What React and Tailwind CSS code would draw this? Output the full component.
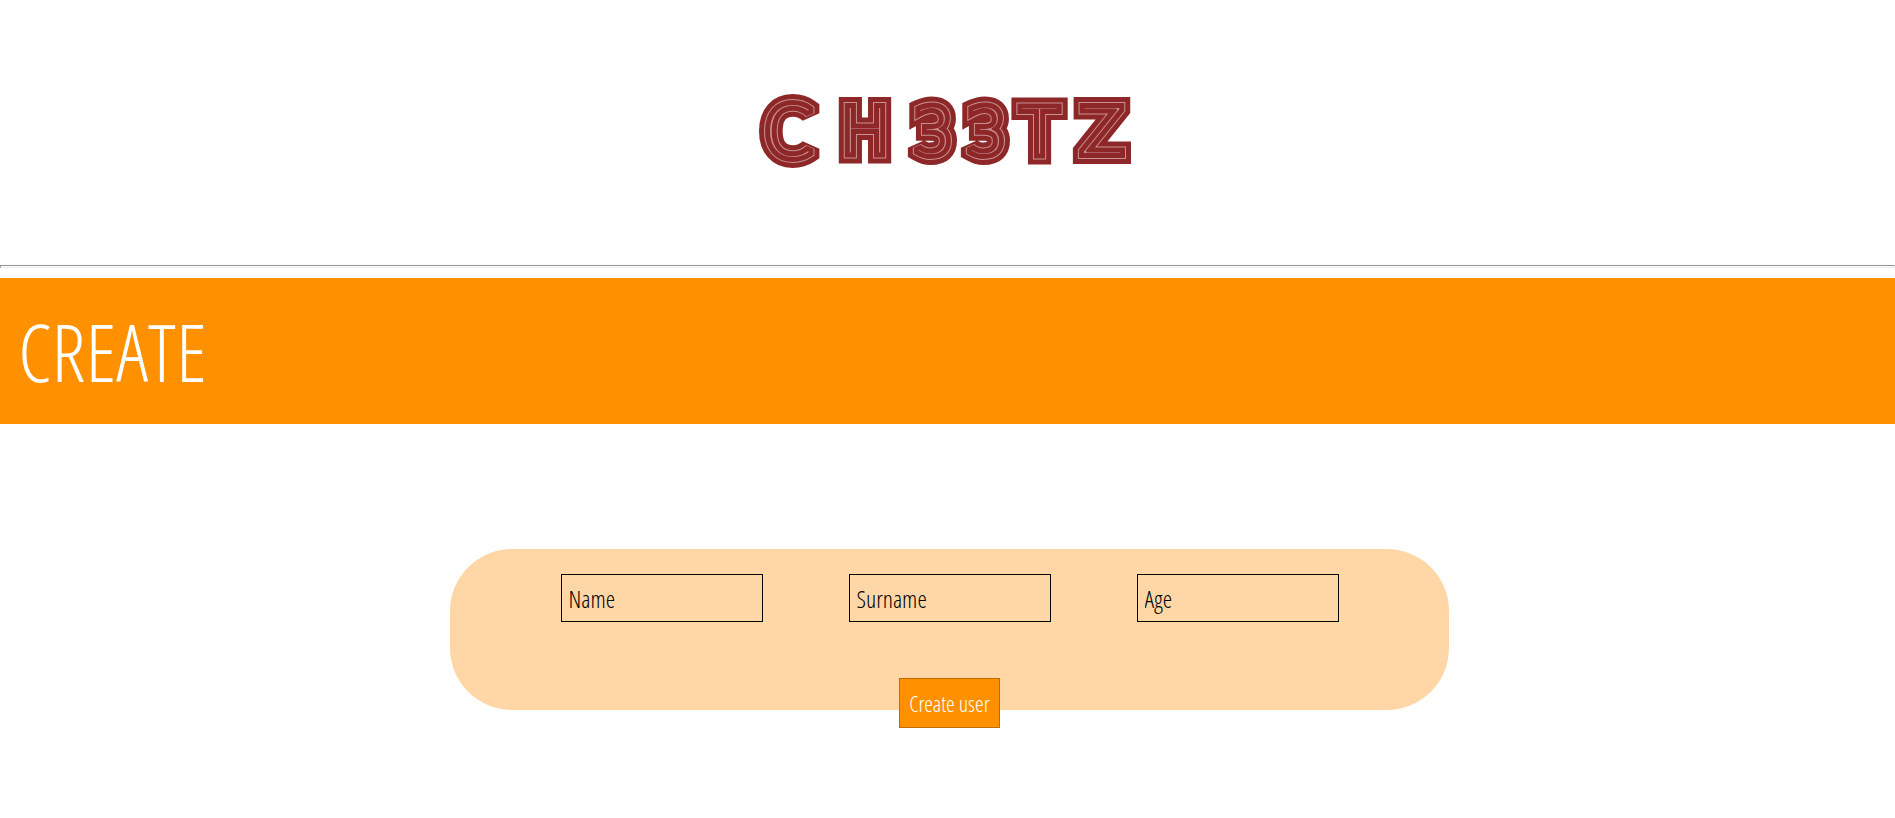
const fields = [
  { id: "name", label: "Name", type: "text" },
  { id: "surname", label: "Surname", type: "text" },
  { id: "age", label: "Age", type: "text" },
];

function Logo() {
  return (
    <svg
      className="h-[80px] w-[384px]"
      viewBox="0 0 384 80"
      role="img"
      aria-label="CH33TZ"
      strokeLinejoin="miter"
      strokeMiterlimit="2"
    >
      <defs>
        <text
          id="wordmark"
          x="7 85 157 210 264 324"
          y="66 63 63 63 63 63"
          fontSize="64"
          fontWeight="200"
          fontFamily="'DejaVu Sans Light', 'DejaVu Sans ExtraLight', 'DejaVu Sans', sans-serif"
        >
          <tspan fontSize="72">C</tspan>H33TZ
        </text>
      </defs>
      <use href="#wordmark" fill="#8e2828" stroke="#8e2828" strokeWidth="20" />
      <use href="#wordmark" fill="none" stroke="#c99090" strokeWidth="10" />
      <use href="#wordmark" fill="#8e2828" stroke="#8e2828" strokeWidth="8" />
      <use href="#wordmark" fill="#c99090" stroke="#8e2828" strokeWidth="2" />
    </svg>
  );
}

export default function App() {
  return (
    <div className="min-h-screen bg-white font-['Open_Sans_Condensed_Light','Open_Sans_Condensed','Liberation_Sans_Narrow','Open_Sans',sans-serif] font-light">
      <header className="flex justify-center pt-[91px] pb-[94px]">
        <Logo />
      </header>
      <hr className="h-[3px] border border-t-[#949494] border-l-[#949494] border-r-[#eeeeee] border-b-[#eeeeee]" />
      <main>
        <div className="mt-[10px] bg-[#ff9100] p-[18px]">
          <h1 className="text-[80px] leading-[110px] font-light text-white [font-kerning:none]">CREATE</h1>
        </div>
        <div className="mt-[125px] pl-1">
          <form className="mx-auto flex h-[161px] max-w-[999px] flex-col items-center gap-14 rounded-[62px] bg-[#ffd7a6] pt-[25px]">
            <div className="flex justify-center gap-[86px]">
              {fields.map((field) => (
                <input
                  key={field.id}
                  id={field.id}
                  name={field.id}
                  type={field.type}
                  aria-label={field.label}
                  placeholder={field.label}
                  className="h-12 w-[202px] border border-black bg-transparent px-[7px] text-2xl text-black placeholder:text-black"
                />
              ))}
            </div>
            <button
              type="button"
              className="h-[50px] shrink-0 border border-[#bf6d00] bg-[#ff9100] px-[9px] text-[22px] whitespace-nowrap text-white"
            >
              Create user
            </button>
          </form>
        </div>
      </main>
    </div>
  );
}
